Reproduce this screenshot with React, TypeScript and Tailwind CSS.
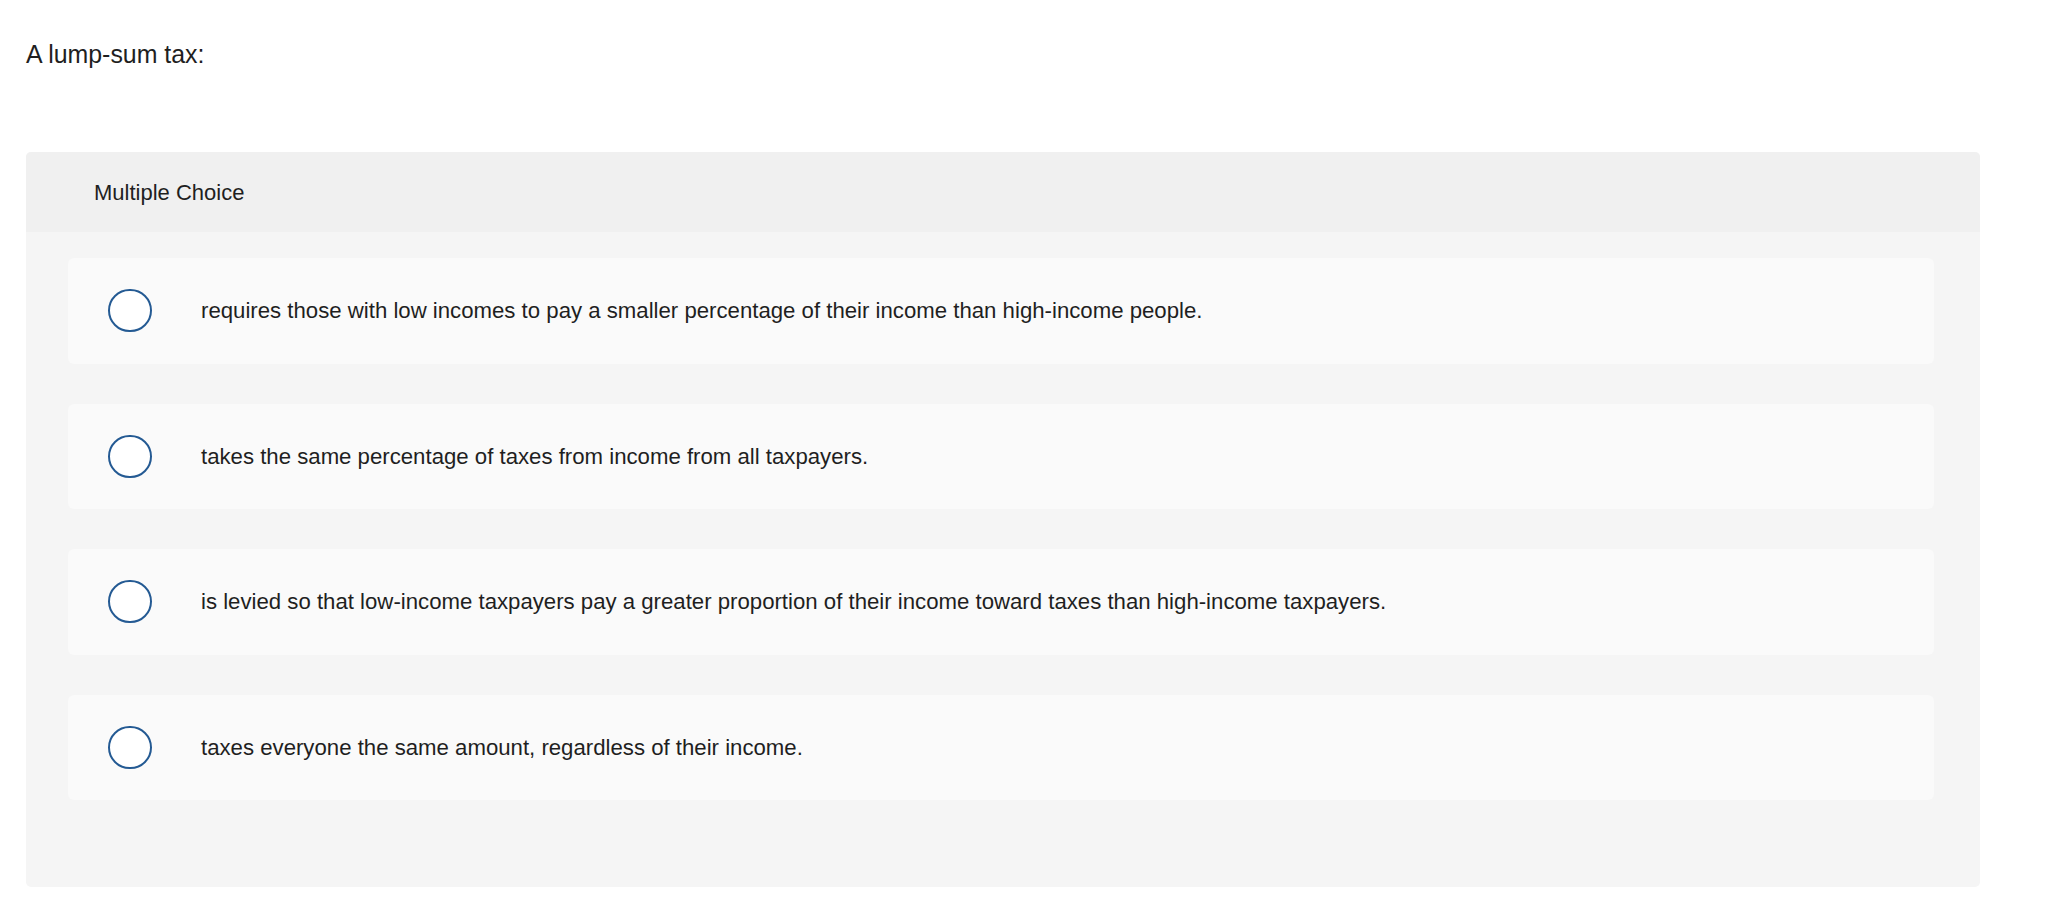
import React, { useState } from 'react';

const choices = [
  'requires those with low incomes to pay a smaller percentage of their income than high-income people.',
  'takes the same percentage of taxes from income from all taxpayers.',
  'is levied so that low-income taxpayers pay a greater proportion of their income toward taxes than high-income taxpayers.',
  'taxes everyone the same amount, regardless of their income.',
];

export default function App() {
  const [selected, setSelected] = useState<number | null>(null);

  return (
    <div
      className="min-h-screen bg-white text-[#1f1f1f] pl-[26px] pr-[86px] pt-[40px]"
      style={{ fontFamily: '"Liberation Sans", Arial, sans-serif' }}
    >
      <p className="text-[24.9px] leading-[28px]">A lump-sum tax:</p>

      <div className="mt-[84px] rounded-[5px] bg-[#f5f5f5] overflow-hidden">
        {/* Header band */}
        <div className="h-[80px] flex items-center pl-[68px] bg-[#f0f0f0] text-[22px]">
          Multiple Choice
        </div>

        {/* Answer list */}
        <div className="flex flex-col gap-[40px] pt-[26px] pb-[87px] pl-[42px] pr-[46px]">
          {choices.map((text, i) => (
            <label
              key={i}
              className="h-[105.5px] flex items-center rounded-[6px] bg-[#fafafa] pl-[40px] cursor-pointer"
              onClick={() => setSelected(i)}
            >
              <span className="w-[44px] h-[43px] shrink-0 rounded-full border-2 border-[#245a93] bg-white flex items-center justify-center">
                {selected === i && <span className="w-[23px] h-[23px] rounded-full bg-[#245a93]" />}
              </span>
              <span className="ml-[49px] text-[22.2px] leading-[25px]">{text}</span>
            </label>
          ))}
        </div>
      </div>
    </div>
  );
}
